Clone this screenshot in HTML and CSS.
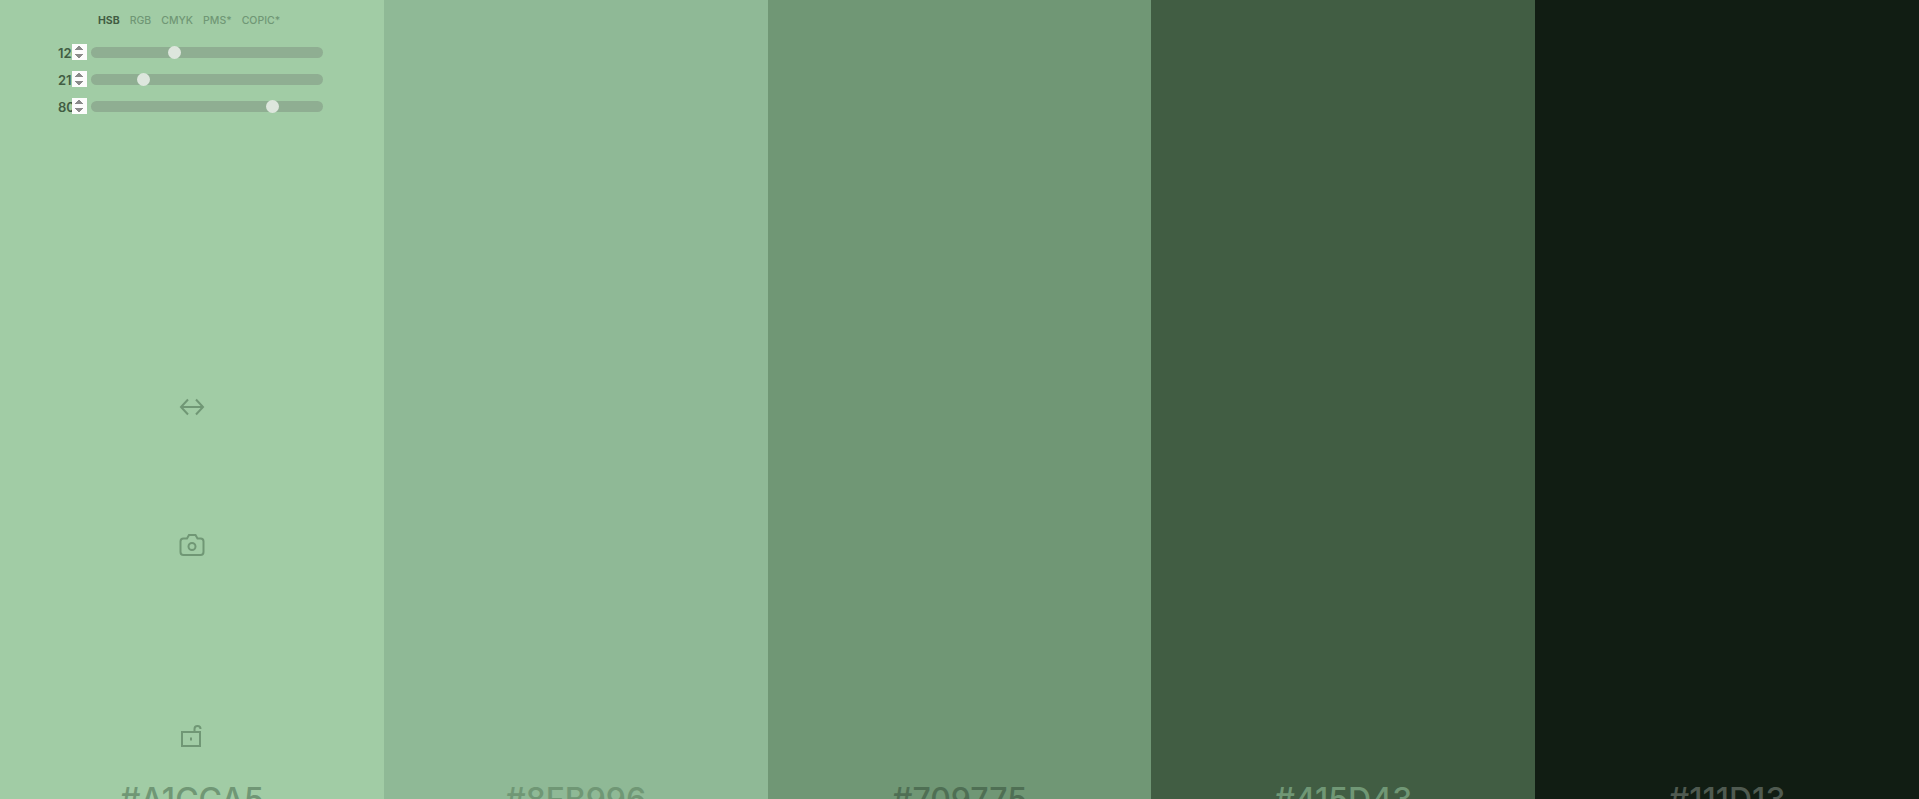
FILE: index.html
```html
<!DOCTYPE html>
<html lang="en">
<head>
    <meta charset="UTF-8">
    <title>Palette</title>
    <link rel="stylesheet" href="styles.css">
</head>
<body>
    <div class="palette">
        <div class="swatch swatch-1">
            <div class="picker">
                <div class="tabs">
                    <span class="tab active">HSB</span>
                    <span class="tab">RGB</span>
                    <span class="tab">CMYK</span>
                    <span class="tab">PMS*</span>
                    <span class="tab">COPIC*</span>
                </div>
                <div class="row">
                    <input class="num" type="number" value="126" min="0" max="360">
                    <input class="slider" type="range" value="126" min="0" max="360">
                </div>
                <div class="row">
                    <input class="num" type="number" value="21" min="0" max="100">
                    <input class="slider" type="range" value="21" min="0" max="100">
                </div>
                <div class="row">
                    <input class="num" type="number" value="80" min="0" max="100">
                    <input class="slider" type="range" value="80" min="0" max="100">
                </div>
            </div>

            <!-- Iconos de acciones -->
            <div class="actions">
                <svg class="icon icon-swap" width="26" height="20" viewBox="0 0 26 20">
                    <path d="M9 2.5 L2 10 L9 17.5 M17 2.5 L24 10 L17 17.5 M2 10 H24"/>
                </svg>
                <svg class="icon icon-camera" width="26" height="24" viewBox="0 0 26 24">
                    <path d="M4.5 5.5 H8 L10 2 H16.500 L18.500 5.500 H21.500 Q24.500 5.500 24.500 8.500 V19 Q24.500 22 21.500 22 H4.500 Q1.500 22 1.500 19 V8.500 Q1.500 5.500 4.500 5.500 Z"/>
                    <circle cx="13" cy="13.500" r="3.500"/>
                </svg>
                <svg class="icon icon-lock" width="26" height="24" viewBox="0 0 26 24">
                    <rect x="3" y="8" width="18" height="14"/>
                    <path d="M12 13.500 V16.500 M15.500 8 V5 Q15.500 2 18.500 2 Q21.500 2 21.500 5"/>
                </svg>
            </div>
            <div class="hex">#A1CCA5</div>
        </div>
        <div class="swatch swatch-2"><div class="hex">#8FB996</div></div>
        <div class="swatch swatch-3"><div class="hex">#709775</div></div>
        <div class="swatch swatch-4"><div class="hex">#415D43</div></div>
        <div class="swatch swatch-5"><div class="hex">#111D13</div></div>
    </div>
</body>
</html>
```
FILE: styles.css
```css
html, body {
    margin: 0;
    height: 100%;
    overflow: hidden;
}
body {
    font-family: Inter, "Liberation Sans", sans-serif;
}
.palette {
    display: grid;
    grid-template-columns: repeat(5, 1fr);
    height: 799px;
    overflow: hidden;
}
.swatch {
    display: flex;
    flex-direction: column;
    height: 799px;
    overflow: hidden;
}
.swatch-1 { background-color: #A1CCA5; }
.swatch-2 { background-color: #8FB996; }
.swatch-3 { background-color: #709775; }
.swatch-4 { background-color: #415D43; }
.swatch-5 { background-color: #111D13; }

.picker {
    padding: 14px 0 0 46px;
}
.tabs {
    display: flex;
    gap: 10px;
    margin: 0 0 12px 52px;
    font-size: 10.5px;
    font-weight: 500;
    line-height: 13px;
}
.tab {
    color: #709775;
}
.tab.active {
    color: #415D43;
    font-weight: 700;
}
.row {
    display: flex;
    align-items: center;
    height: 27px;
}
.num {
    box-sizing: border-box;
    width: 41px;
    height: 17px;
    padding: 0 0 0 12px;
    border: 0;
    background: transparent;
    color: #415D43;
    font-family: inherit;
    font-size: 13px;
    font-weight: 600;
    outline: none;
}
.num::-webkit-inner-spin-button {
    opacity: 1;
    height: 17px;
}
.slider {
    -webkit-appearance: none;
    appearance: none;
    width: 232px;
    height: 11px;
    margin: 0 0 0 4px;
    border-radius: 6px;
    background-color: #8FAE92;
    outline: none;
}
.slider::-webkit-slider-thumb {
    -webkit-appearance: none;
    width: 13px;
    height: 13px;
    border-radius: 50%;
    background-color: #DDE6DD;
}

.actions {
    display: flex;
    flex-direction: column;
    align-items: center;
    margin-top: 277px;
}
.icon {
    fill: none;
    stroke: #709775;
    stroke-width: 2;
}
.icon-camera { margin-top: 116px; }
.icon-lock { margin-top: 167px; }

.hex {
    margin-top: auto;
    margin-bottom: -14px;
    text-align: center;
    font-size: 32px;
    font-weight: 500;
    line-height: 26px;
    color: #709775;
}
.swatch-2 .hex { color: #709775; }
.swatch-3 .hex { color: #4F6F54; }
.swatch-4 .hex { color: #709775; }
.swatch-5 .hex { color: #4F5A50; }
```
